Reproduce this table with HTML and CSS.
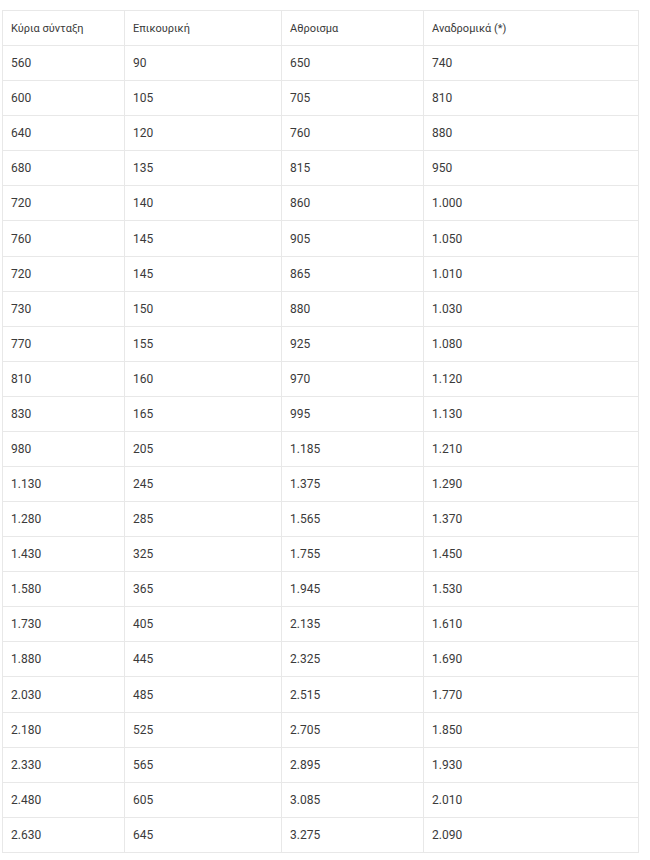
FILE: index.html
```html
<!DOCTYPE html>
<html lang="el">
<head>
<meta charset="utf-8">
<link rel="stylesheet" href="styles.css">
</head>
<body>
<table class="pension">
<colgroup>
<col class="c1"><col class="c2"><col class="c3"><col class="c4">
</colgroup>
<thead>
<tr><th>Κύρια σύνταξη</th><th>Επικουρική</th><th>Αθροισμα</th><th>Αναδρομικά (*)</th></tr>
</thead>
<tbody>
<tr><td>560</td><td>90</td><td>650</td><td>740</td></tr>
<tr><td>600</td><td>105</td><td>705</td><td>810</td></tr>
<tr><td>640</td><td>120</td><td>760</td><td>880</td></tr>
<tr><td>680</td><td>135</td><td>815</td><td>950</td></tr>
<tr><td>720</td><td>140</td><td>860</td><td>1.000</td></tr>
<tr><td>760</td><td>145</td><td>905</td><td>1.050</td></tr>
<tr><td>720</td><td>145</td><td>865</td><td>1.010</td></tr>
<tr><td>730</td><td>150</td><td>880</td><td>1.030</td></tr>
<tr><td>770</td><td>155</td><td>925</td><td>1.080</td></tr>
<tr><td>810</td><td>160</td><td>970</td><td>1.120</td></tr>
<tr><td>830</td><td>165</td><td>995</td><td>1.130</td></tr>
<tr><td>980</td><td>205</td><td>1.185</td><td>1.210</td></tr>
<tr><td>1.130</td><td>245</td><td>1.375</td><td>1.290</td></tr>
<tr><td>1.280</td><td>285</td><td>1.565</td><td>1.370</td></tr>
<tr><td>1.430</td><td>325</td><td>1.755</td><td>1.450</td></tr>
<tr><td>1.580</td><td>365</td><td>1.945</td><td>1.530</td></tr>
<tr><td>1.730</td><td>405</td><td>2.135</td><td>1.610</td></tr>
<tr><td>1.880</td><td>445</td><td>2.325</td><td>1.690</td></tr>
<tr><td>2.030</td><td>485</td><td>2.515</td><td>1.770</td></tr>
<tr><td>2.180</td><td>525</td><td>2.705</td><td>1.850</td></tr>
<tr><td>2.330</td><td>565</td><td>2.895</td><td>1.930</td></tr>
<tr><td>2.480</td><td>605</td><td>3.085</td><td>2.010</td></tr>
<tr><td>2.630</td><td>645</td><td>3.275</td><td>2.090</td></tr>
</tbody>
</table>
</body>
</html>
```
FILE: styles.css
```css
html, body {
  margin: 0;
  padding: 0;
  background: #ffffff;
}
body {
  padding: 10px 0 0 2px;
  font-family: Roboto, "Noto Sans", "Liberation Sans", sans-serif;
  font-size: 12px;
  color: #3a3a3a;
}
.pension {
  border-collapse: collapse;
  width: 636px;
  table-layout: fixed;
}
.c1 { width: 122px; }
.c2 { width: 157px; }
.c3 { width: 142px; }
.c4 { width: 215px; }
.pension th,
.pension td {
  border: 1px solid #e8e8e8;
  padding: 0 8px;
  height: 34.08px;
  text-align: left;
  font-weight: 400;
  vertical-align: middle;
  white-space: nowrap;
}
.pension th {
  font-size: 11px;
}
```
